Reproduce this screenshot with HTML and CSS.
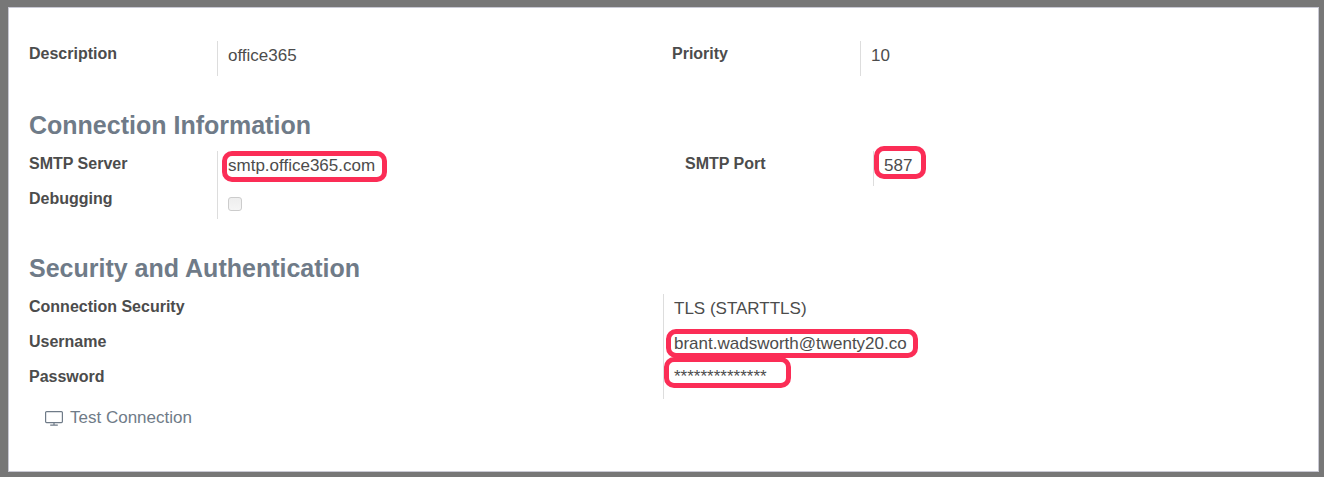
FILE: index.html
```html
<!DOCTYPE html>
<html lang="en">
<head>
<meta charset="utf-8">
<meta name="viewport" content="width=device-width, initial-scale=1">
<title>Outgoing mail server</title>
<link rel="stylesheet" href="styles.css">
</head>
<body>
<main class="sheet">
  <section class="group group-general">
    <div class="field">
      <label class="label" for="description">Description</label>
      <div class="value"><output id="description">office365</output></div>
    </div>
    <div class="field">
      <label class="label" for="priority">Priority</label>
      <div class="value"><output id="priority">10</output></div>
    </div>
  </section>

  <h2 class="heading">Connection Information</h2>
  <section class="group group-connection">
    <div class="column">
      <div class="field">
        <label class="label" for="server">SMTP Server</label>
        <div class="value"><output id="server">smtp.office365.com</output><span class="mark mark-server"></span></div>
      </div>
      <div class="field field-short">
        <label class="label" for="debugging">Debugging</label>
        <div class="value"><input class="checkbox" type="checkbox" id="debugging"></div>
      </div>
    </div>
    <div class="column">
      <div class="field">
        <label class="label" for="port">SMTP Port</label>
        <div class="value"><output id="port">587</output><span class="mark mark-port"></span></div>
      </div>
    </div>
  </section>

  <h2 class="heading">Security and Authentication</h2>
  <section class="column">
    <div class="field field-half">
      <label class="label" for="security">Connection Security</label>
      <div class="value"><output id="security">TLS (STARTTLS)</output></div>
    </div>
    <div class="field field-half">
      <label class="label" for="username">Username</label>
      <div class="value"><output id="username">brant.wadsworth@twenty20.co</output><span class="mark mark-username"></span></div>
    </div>
    <div class="field field-half">
      <label class="label" for="password">Password</label>
      <div class="value value-password"><output id="password">**************</output><span class="mark mark-password"></span></div>
    </div>
  </section>

  <button class="test-button" type="button">
    <svg class="icon" viewBox="0 0 18 15" aria-hidden="true">
      <rect x="0.6" y="0.6" width="16.8" height="11" rx="1"/>
      <path d="M9 11.6V14M5.2 14.2h7.6"/>
    </svg>
    Test Connection
  </button>
</main>
</body>
</html>
```
FILE: styles.css
```css
* {
  box-sizing: border-box;
}

body {
  margin: 0;
  padding: 7px 5px 5px 8px;
  min-height: 100vh;
  display: flex;
  background: #777;
  color: #4c4c4c;
  font: 16px/20px "Liberation Sans", Arial, sans-serif;
}

.sheet {
  flex: 1;
  padding: 33px 21px 40px 20px;
  background: #fff;
  border: 1px solid #c8c8d3;
}

.group {
  display: grid;
  grid-template-columns: 1fr 1fr;
}

.group-general {
  column-gap: 18px;
  margin-bottom: 34px;
}

.group-connection {
  column-gap: 44px;
  margin-bottom: 34px;
}

.heading {
  margin: 0 0 11px;
  color: #6f7b88;
  font-size: 25px;
  line-height: 30px;
}

.field {
  display: grid;
  grid-template-columns: 188px 1fr;
  min-height: 35px;
}

.field-short {
  min-height: 33px;
}

.field-half {
  grid-template-columns: 1fr 1fr;
}

.label {
  padding-top: 3px;
  font-weight: bold;
}

.value {
  position: relative;
  padding: 5px 0 0 10px;
  border-left: 1px solid #ddd;
  font-size: 17px;
}

.value-password {
  padding-top: 3px;
}

.checkbox {
  appearance: none;
  display: block;
  width: 14px;
  height: 14px;
  margin: 6px 0 0;
  border: 1px solid #ccc;
  border-radius: 3px;
  background: linear-gradient(#eee, #f5f5f5);
}

/* Highlight rings drawn over the values */
.mark {
  position: absolute;
  border: 5px solid #fb2d56;
  border-radius: 10px;
  pointer-events: none;
}

.mark-server {
  left: 4px;
  top: 0;
  width: 165px;
  height: 31px;
}

.mark-port {
  left: 0;
  top: -5px;
  width: 52px;
  height: 33px;
}

.mark-username {
  left: 2px;
  top: 0;
  width: 252px;
  height: 29px;
}

.mark-password {
  left: 0;
  top: -7px;
  width: 127px;
  height: 31px;
}

.test-button {
  display: flex;
  align-items: center;
  gap: 7px;
  margin: 9px 0 0 16px;
  padding: 0;
  border: 0;
  background: none;
  color: #6f7b88;
  font: inherit;
  font-size: 17px;
}

.icon {
  width: 18px;
  height: 15px;
  fill: none;
  stroke: currentColor;
  stroke-width: 1.2;
}
```
